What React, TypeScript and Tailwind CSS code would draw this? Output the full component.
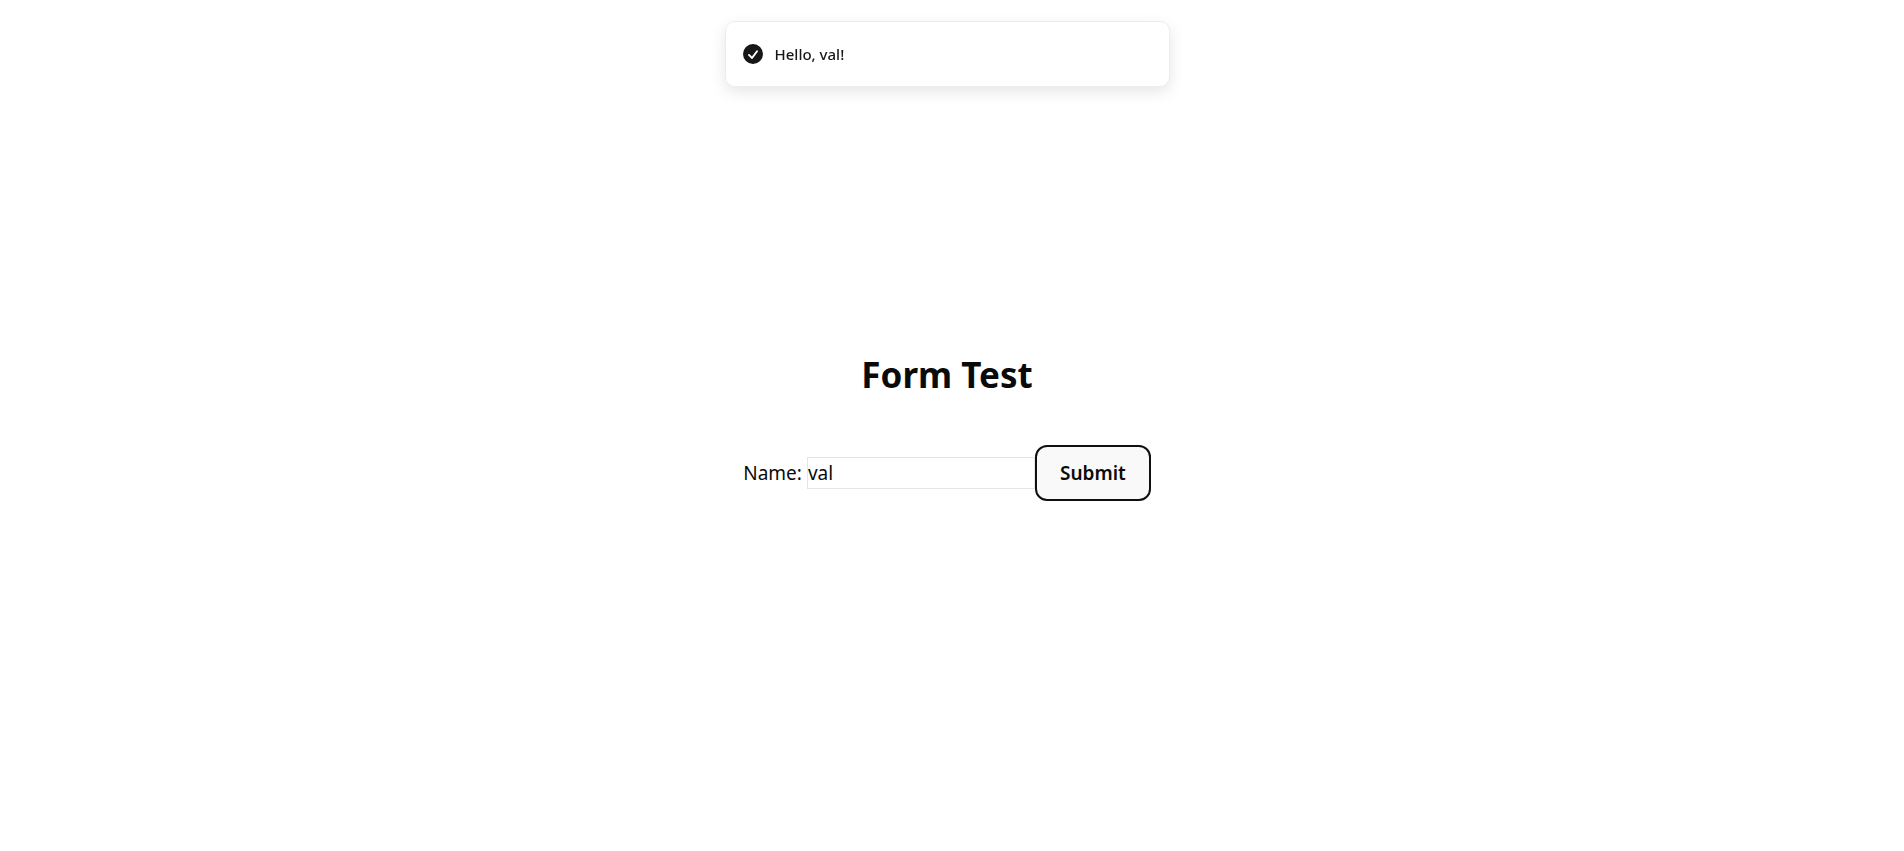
import { useState } from "react";

function SuccessIcon() {
  return (
    <svg viewBox="2 2 16 16" fill="currentColor" className="size-5 shrink-0" aria-hidden="true">
      <path
        fillRule="evenodd"
        clipRule="evenodd"
        d="M10 18a8 8 0 100-16 8 8 0 000 16zm3.857-9.809a.75.75 0 00-1.214-.882l-3.483 4.79-1.88-1.88a.75.75 0 10-1.06 1.061l2.5 2.5a.75.75 0 001.137-.089l4-5.5z"
      />
    </svg>
  );
}

function Toast({ message }: { message: string }) {
  return (
    <div className="pointer-events-none fixed inset-x-0 top-[21px] flex justify-center pr-2.5">
      <div
        role="status"
        className="pointer-events-auto flex w-full max-w-[445px] items-center gap-3 rounded-[10px] border border-[#ededed] bg-white px-[17px] py-5 text-[#171717] shadow-[0_5px_15px_rgba(0,0,0,0.1)]"
      >
        <SuccessIcon />
        <span className="text-[15px] leading-6 font-medium">{message}</span>
      </div>
    </div>
  );
}

export default function App() {
  const [name, setName] = useState("val");
  return (
    <div className="min-h-screen bg-white pr-2.5 font-['Noto_Sans',sans-serif] text-[#0a0a0a]">
      <Toast message="Hello, val!" />
      <main className="flex min-h-screen flex-col items-center justify-center gap-[46px]">
        <h1 className="text-[35px] leading-[48px] font-bold">Form Test</h1>
        <form className="flex items-center text-[19px] leading-[30px]" onSubmit={(e) => e.preventDefault()}>
          <label htmlFor="name" className="mr-[5px]">
            Name:
          </label>
          <input
            id="name"
            name="name"
            type="text"
            autoComplete="off"
            value={name}
            onChange={(e) => setName(e.target.value)}
            className="h-8 w-[228px] border border-[#e5e5e5] outline-none"
          />
          <button
            type="submit"
            className="rounded-xl border-2 border-[#101010] bg-[#f9f9f9] px-[23px] py-[11px] font-semibold"
          >
            Submit
          </button>
        </form>
      </main>
    </div>
  );
}
